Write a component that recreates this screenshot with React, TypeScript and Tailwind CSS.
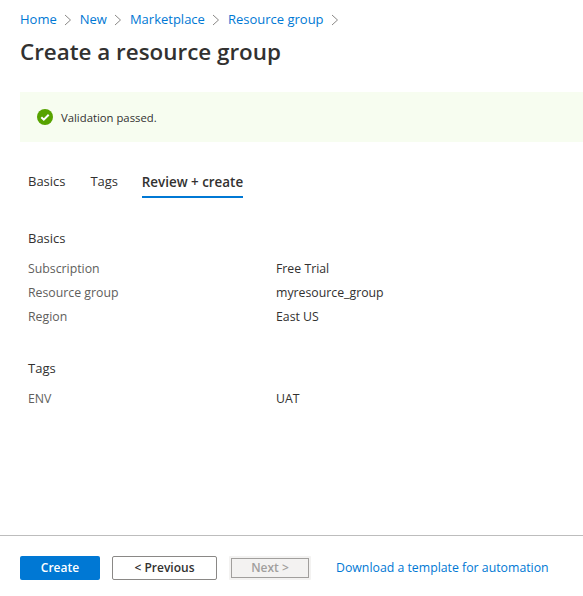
const font = "[font-family:'Open_Sans','Noto_Sans',sans-serif]"

function Chevron() {
  return (
    <svg width="8" height="12" viewBox="0 0 8 12" fill="none" stroke="#8a8886" strokeWidth="1" className="mx-[7.5px]">
      <path d="M1 1l5.5 5L1 11" />
    </svg>
  )
}

function Row({ label, value }: { label: string; value: string }) {
  return (
    <div className="flex h-[24px] items-center text-[12.3px]">
      <div className="w-[248px] text-[#605e5c]">{label}</div>
      <div className="text-[#323130]">{value}</div>
    </div>
  )
}

export default function App() {
  return (
    <div className={`flex h-[596px] w-[583px] flex-col overflow-hidden bg-white ${font}`}>
      {/* Header */}
      <div className="flex h-[39px] items-center pl-[20px] pt-[1px] text-[13px] text-[#0078d4]">
        <a>Home</a>
        <Chevron />
        <a>New</a>
        <Chevron />
        <a>Marketplace</a>
        <Chevron />
        <a>Resource group</a>
        <Chevron />
      </div>
      <h1 className="pl-[20px] text-[22.4px] leading-[26px] font-semibold text-[#323130]">Create a resource group</h1>

      {/* Validation banner */}
      <div className="mt-[27px] ml-[20px] flex h-[50px] shrink-0 items-center gap-[8px] bg-[#f7fdf0] pl-[17px]">
        <svg width="16" height="16" viewBox="0 0 16 16">
          <circle cx="8" cy="8" r="8" fill="#57a300" />
          <path d="M4.3 8.2l2.5 2.5 4.9-5" fill="none" stroke="#fff" strokeWidth="2" />
        </svg>
        <span className="pt-[2px] text-[11.3px] text-[#323130]">Validation passed.</span>
      </div>

      {/* Tabs */}
      <div className="mt-[27px] flex gap-[25px] pl-[28px] text-[13px] text-[#323130]">
        <div className="h-[29px] pt-[3px]">Basics</div>
        <div className="-mr-[1px] h-[29px] pt-[3px] tracking-[-0.1px]">Tags</div>
        <div className="h-[29px] border-b-2 border-[#0078d4] pt-[3px] text-[13.4px] leading-[20px] font-semibold">Review + create</div>
      </div>

      {/* Summary */}
      <div className="mt-[28px] pl-[28px]">
        <div className="h-[24px] text-[13px] leading-[24px] text-[#323130]">Basics</div>
        <div className="mt-[7px]">
          <Row label="Subscription" value="Free Trial" />
          <Row label="Resource group" value="myresource_group" />
          <Row label="Region" value="East US" />
        </div>
        <div className="mt-[27px] h-[24px] text-[13px] leading-[24px] text-[#323130]">Tags</div>
        <div className="mt-[7px]">
          <Row label="ENV" value="UAT" />
        </div>
      </div>

      {/* Footer */}
      <div className="mt-auto flex h-[61px] shrink-0 items-start border-t border-[#bdbdbd] pt-[20px] pl-[20px]">
        <button className="h-[24px] w-[80px] rounded-[2px] bg-[#0078d4] text-[12px] font-semibold text-white">Create</button>
        <button className="ml-[12px] h-[24px] w-[105px] rounded-[2px] border border-[#8a8886] bg-white text-[12px] font-semibold text-[#323130]">&lt; Previous</button>
        <div className="ml-[12px] rounded-[1px] border-2 border-[#f3f2f1]">
          <button className="block h-[20px] w-[78px] border border-[#a19f9d] bg-[#f3f2f1] text-[12px] font-semibold text-[#a19f9d]">Next &gt;</button>
        </div>
        <a className="ml-[25px] h-[24px] text-[12.3px] leading-[24px] text-[#0078d4]">Download a template for automation</a>
      </div>
    </div>
  )
}
